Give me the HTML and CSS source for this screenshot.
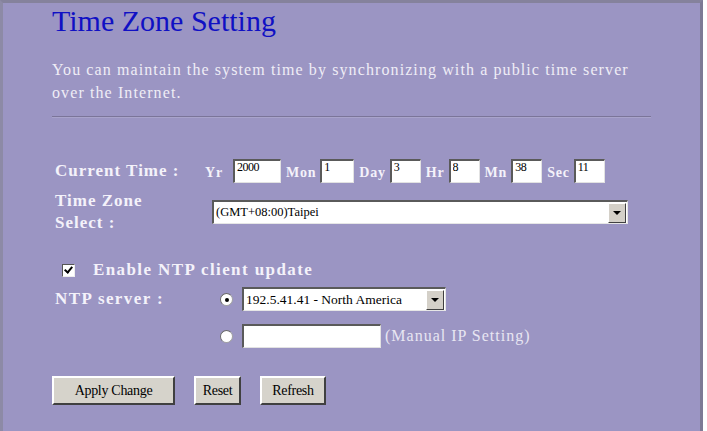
FILE: index.html
```html
<!DOCTYPE html>
<html lang="en">
<head>
    <meta charset="UTF-8">
    <title>Time Zone Setting</title>
    <link rel="stylesheet" href="styles.css">
</head>
<body>
    <div class="panel">
        <h1 class="title">Time Zone Setting</h1>
        <p class="intro">You can maintain the system time by synchronizing with a public time server over the Internet.</p>
        <hr class="rule">

        <div class="form-row time-row">
            <div class="label">Current Time :</div>
            <div class="field">
                <span class="unit">Yr</span><input class="box box-yr" type="text" value="2000">
                <span class="unit">Mon</span><input class="box box-mon" type="text" value="1">
                <span class="unit">Day</span><input class="box" type="text" value="3">
                <span class="unit">Hr</span><input class="box" type="text" value="8">
                <span class="unit">Mn</span><input class="box" type="text" value="38">
                <span class="unit">Sec</span><input class="box" type="text" value="11">
            </div>
        </div>

        <div class="form-row zone-row">
            <div class="label">Time Zone<br>Select :</div>
            <div class="field">
                <div class="combo combo-zone">
                    <span class="combo-text">(GMT+08:00)Taipei</span>
                    <span class="combo-btn"></span>
                </div>
            </div>
        </div>

        <div class="check-row">
            <span class="checkbox"></span>
            <span class="label label-wide">Enable NTP client update</span>
        </div>

        <div class="form-row ntp-row">
            <div class="label label-wide">NTP server :</div>
            <div class="field">
                <span class="radio checked"></span>
                <div class="combo combo-ntp">
                    <span class="combo-text">192.5.41.41 - North America</span>
                    <span class="combo-btn"></span>
                </div>
            </div>
        </div>

        <div class="form-row manual-row">
            <div class="label"></div>
            <div class="field">
                <span class="radio"></span>
                <input class="box box-ip" type="text" value="">
                <span class="hint">(Manual IP Setting)</span>
            </div>
        </div>

        <div class="buttons">
            <button class="btn btn-apply">Apply Change</button>
            <button class="btn btn-reset">Reset</button>
            <button class="btn btn-refresh">Refresh</button>
        </div>
    </div>
</body>
</html>
```

FILE: styles.css
```css
body {
    margin: 0;
    background: #ffffff;
    font-family: "Liberation Serif", "Times New Roman", serif;
}

.panel {
    width: 703px;
    min-height: 440px;
    box-sizing: border-box;
    padding-left: 49px;
    background: #9b95c3;
    border-top: 3px solid #85829c;
    border-left: 3px solid #8d8aa6;
    border-right: 3px solid #7d7a95;
}

.title {
    margin: 0;
    padding-top: 1px;
    font-size: 30px;
    font-weight: normal;
    line-height: 34px;
    color: #1010c4;
}

.intro {
    margin: 20px 0 0;
    width: 600px;
    font-size: 16px;
    line-height: 23px;
    letter-spacing: 1.1px;
    color: #efedf6;
}

.rule {
    margin: 12px 0 0;
    width: 599px;
    height: 0;
    border: none;
    border-top: 1px solid #7b7599;
    border-bottom: 1px solid #a9a4cb;
}

.form-row {
    display: grid;
    grid-template-columns: 145px 1fr;
    align-items: center;
    padding-left: 3px;
}

.label {
    font-size: 17px;
    font-weight: bold;
    line-height: 22px;
    letter-spacing: 1px;
    color: #f4f2fa;
}

.label-wide {
    letter-spacing: 1.4px;
}

.field {
    display: flex;
    align-items: center;
}

.time-row {
    margin-top: 41px;
}

.unit {
    padding: 4px 4px 0 5px;
    font-size: 14px;
    font-weight: bold;
    letter-spacing: 0.8px;
    color: #f4f2fa;
}

.unit:first-child {
    padding-right: 10px;
}

.box {
    width: 31px;
    height: 24px;
    box-sizing: border-box;
    margin: 0;
    padding: 0 2px 8px;
    background: #ffffff;
    border-top: 2px solid #5a5a5a;
    border-left: 2px solid #5a5a5a;
    border-right: 1px solid #e2e2e2;
    border-bottom: 1px solid #e2e2e2;
    font-family: "Liberation Serif", serif;
    font-size: 12px;
    line-height: 13px;
    letter-spacing: -0.5px;
}

.box-yr {
    width: 48px;
}

.box-mon {
    width: 34px;
}

.zone-row {
    margin-top: 7px;
}

.combo {
    display: flex;
    align-items: center;
    height: 24px;
    box-sizing: border-box;
    background: #ffffff;
    border-top: 2px solid #5a5a5a;
    border-left: 2px solid #5a5a5a;
    border-right: 1px solid #e6e6e6;
    border-bottom: 1px solid #e6e6e6;
}

.combo-zone {
    width: 416px;
    margin-left: 12px;
}

.combo-text {
    flex: 1;
    padding-left: 2px;
    font-size: 12.5px;
    color: #000;
}

.combo-btn {
    position: relative;
    width: 18px;
    height: 20px;
    margin-right: 1px;
    box-sizing: border-box;
    background: #d4d0c8;
    border-top: 1px solid #ffffff;
    border-left: 1px solid #ffffff;
    border-right: 1px solid #404040;
    border-bottom: 1px solid #404040;
}

.combo-btn::after {
    content: "";
    position: absolute;
    left: 4px;
    top: 7px;
    border-left: 4px solid transparent;
    border-right: 4px solid transparent;
    border-top: 4px solid #000;
}

.check-row {
    display: flex;
    align-items: center;
    margin-top: 25px;
    padding-left: 10px;
}

.checkbox {
    position: relative;
    width: 11px;
    height: 11px;
    margin-right: 18px;
    background: #ffffff;
    border-top: 1px solid #555;
    border-left: 1px solid #555;
    border-right: 1px solid #eee;
    border-bottom: 1px solid #eee;
}

.checkbox::after {
    content: "";
    position: absolute;
    left: 3px;
    top: 0;
    width: 3px;
    height: 6px;
    border-right: 2px solid #000;
    border-bottom: 2px solid #000;
    transform: rotate(40deg);
}

.ntp-row {
    margin-top: 6px;
}

.radio {
    position: relative;
    width: 11px;
    height: 11px;
    margin: 0 9px 0 20px;
    border-radius: 50%;
    background: #ffffff;
    border: 1px solid #a0a0a0;
    border-top-color: #6a6a6a;
    border-left-color: #6a6a6a;
}

.radio.checked::after {
    content: "";
    position: absolute;
    left: 4px;
    top: 4px;
    width: 4px;
    height: 4px;
    border-radius: 50%;
    background: #000;
}

.combo-ntp {
    width: 204px;
}

.combo-ntp .combo-text {
    font-size: 13.5px;
}

.manual-row {
    margin-top: 13px;
}

.box-ip {
    width: 139px;
}

.hint {
    margin-left: 4px;
    font-size: 16px;
    letter-spacing: 1px;
    color: #e8e6f2;
}

.buttons {
    display: flex;
    gap: 19px;
    margin-top: 28px;
}

.btn {
    height: 29px;
    padding: 0;
    background: #d6d3cb;
    border-top: 2px solid #ffffff;
    border-left: 2px solid #ffffff;
    border-right: 2px solid #404040;
    border-bottom: 2px solid #404040;
    font-family: "Liberation Serif", serif;
    font-size: 14px;
    letter-spacing: -0.3px;
    color: #000;
}

.btn-apply {
    width: 123px;
}

.btn-reset {
    width: 47px;
}

.btn-refresh {
    width: 66px;
}
```
